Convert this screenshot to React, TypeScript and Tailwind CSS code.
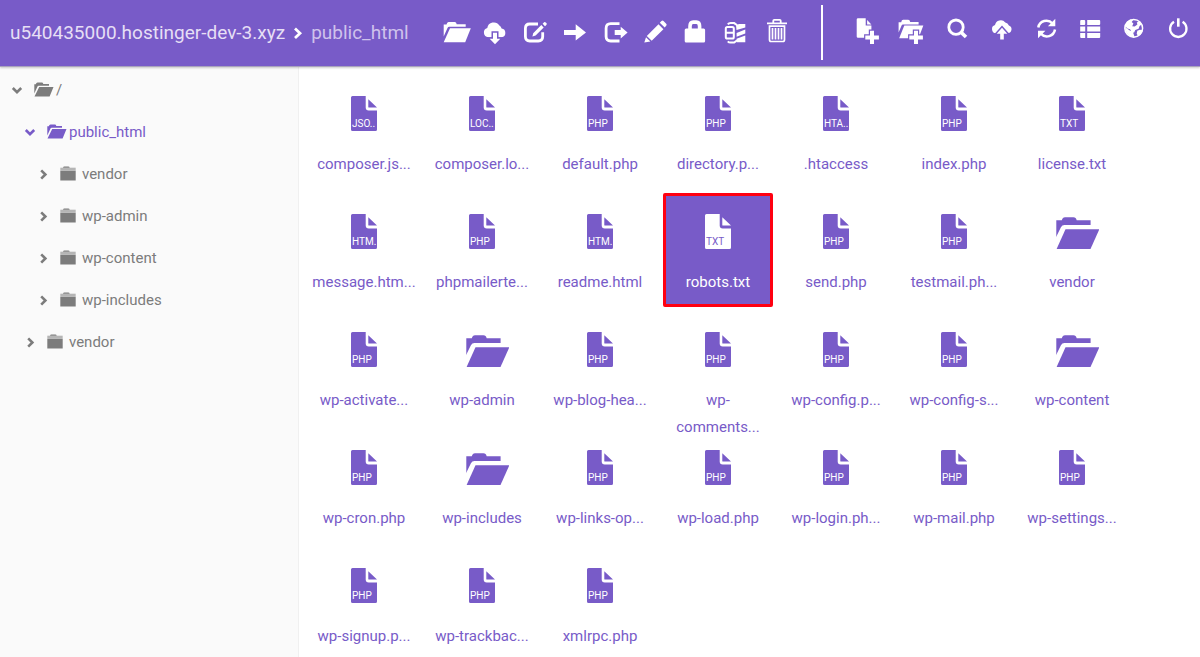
import type { ReactNode } from "react";

type IconProps = { children: ReactNode };

function Glyph({ children }: IconProps) {
  return (
    <svg viewBox="0 0 40 40" className="size-10" fill="currentColor" aria-hidden="true">
      {children}
    </svg>
  );
}

const line = { fill: "none", stroke: "currentColor" } as const;
const gap = "stroke-[#785bc8]";

const fileActions: { label: string; icon: ReactNode }[] = [
  {
    label: "Open",
    icon: (
      <>
        <path d="M6.7 12.5h2.8q.5-2.5 2-2.5h6.2q1.6 0 2 2.3h9v2.5H12.2q-1.2 0-1.7 1.2L6.7 24.5z" />
        <path d="M13 16.2h20.8l-5.6 14.1H6.7z" />
      </>
    ),
  },
  {
    label: "Download",
    icon: (
      <>
        <path d="M11.3 25.3a4.7 4.7 0 0 1-1-9.2 6.6 6.6 0 0 1 12.1-2.6 5.2 5.2 0 0 1 2.2 3.1 4.4 4.4 0 0 1 0 8.7z" />
        <path d="M16 20.7h4v6h3.3L18 32.3l-5.3-5.6H16z" className={gap} strokeWidth="3" />
        <path d="M16 20.7h4v6h3.3L18 32.3l-5.3-5.6H16z" />
      </>
    ),
  },
  {
    label: "Rename",
    icon: (
      <>
        <path d="M21 12h-8.300Q8.400 12 8.400 16.300v8.300q0 4.400 4.300 4.400h8.600q4.400 0 4.400-4.400v-4.400" {...line} strokeWidth="2.8" />
        <path d="M16.200 21.200l8.100-8.100 2.400 2.400-8.100 8.100-3.200.8zM25.600 11.800l1.500-1.500q.8-.6 1.600.1l.7.700q.7.800.1 1.600L28 14.200z" />
      </>
    ),
  },
  {
    label: "Copy",
    icon: <path d="M7 18h11.700v-5.700L29 20.400l-10.300 8V23H7z" />,
  },
  {
    label: "Move",
    icon: (
      <>
        <path d="M22.500 11.700h-8.800q-4.600 0-4.600 4.600v8.300q0 4.400 4.600 4.400h8.800" {...line} strokeWidth="2.800" />
        <path d="M17.700 18h6v-3.200l6.900 5.800-6.900 5.800V23h-6z" />
      </>
    ),
  },
  {
    label: "Edit",
    icon: (
      <path d="M9.800 24L21.500 12.300l4.900 4.900L14.700 28.800zM22.800 10.800l1.700-1.700q1-1 2 0l2.700 2.700q1 1 0 2L27.700 15.600zM9 25.200l4.400 4.200-6.100 1.100z" />
    ),
  },
  {
    label: "Permissions",
    icon: (
      <>
        <rect x="7.700" y="16.500" width="20.400" height="14" rx="1.500" />
        <path d="M13 17v-2.700q0-4.200 3.200-4.200h3.200q3.200 0 3.200 4.200V17" {...line} strokeWidth="3.600" />
      </>
    ),
  },
  {
    label: "Archive",
    icon: (
      <>
        <rect x="8.800" y="15" width="8" height="11.600" rx="1.600" {...line} strokeWidth="2" />
        <path d="M8.800 20.800h8M10.800 12.300q1-1.200 2.800-1.200h3.600l3 2.200M10.800 29.300q1 1.200 2.800 1.200h3.600l3-2.200" {...line} strokeWidth="2" />
        <path d="M19 13.200l3-1.200h6.300v3.600L19.500 18zM19.600 21l8.700-3.600v4l-8.700 3.400zM19.600 26.800l8.700-3.400v6.800h-8.600z" />
      </>
    ),
  },
  {
    label: "Delete",
    icon: (
      <>
        <path d="M10 11.400h20M16.300 11V8.800q0-1 1-1h5.400q1 0 1 1V11" {...line} strokeWidth="1.800" />
        <path d="M12.500 14.200h15v13.600q0 1.700-1.700 1.700H14.200q-1.700 0-1.700-1.700zM15.500 16v11.500M18.500 16v11.500M21.500 16v11.500M24.500 16v11.500" {...line} strokeWidth="1.700" />
      </>
    ),
  },
];

const plus = "M23 21.700h4V26.400h4.900v4H27V35h-4v-4.600h-4.700v-4H23z";

const globalActions: { label: string; icon: ReactNode }[] = [
  {
    label: "New file",
    icon: (
      <>
        <path d="M11 9.300h7.700v7.300h5.700v12.200H11q-1.300 0-1.300-1.200V10.500q0-1.200 1.300-1.200zM20.100 11l4.300 4.400h-4.300z" />
        <path d={plus} className={gap} strokeWidth="2.400" />
        <path d={plus} />
      </>
    ),
  },
  {
    label: "New folder",
    icon: (
      <>
        <path d="M7.600 13.200h2.600q.4-2.400 2-2.400h5q1.600 0 2 2.200h8.400v2.400H12q-1 0-1.400 1L7.600 23.500z" />
        <path d="M13.300 16.600h19L27.500 29.300H8.200z" />
        <path d={plus} className={gap} strokeWidth="2.400" />
        <path d={plus} />
      </>
    ),
  },
  {
    label: "Search",
    icon: (
      <>
        <circle cx="20" cy="18.200" r="7.200" {...line} strokeWidth="2.800" />
        <path d="M25 23.200l5 4.800" {...line} strokeWidth="3.600" />
      </>
    ),
  },
  {
    label: "Upload",
    icon: (
      <>
        <path d="M15.800 24.200a4.200 4.200 0 0 1-.8-8.200 5.900 5.900 0 0 1 10.300-2.600 5.300 5.300 0 0 1 3.600 3 4 4 0 0 1-.7 7.700z" />
        <path d="M20.200 30.500v-5.700h-3.500l5.300-6 5.300 6h-3.500v5.700z" className={gap} strokeWidth="3" />
        <path d="M20.200 30.500v-5.700h-3.500l5.300-6 5.300 6h-3.500v5.700z" />
      </>
    ),
  },
  {
    label: "Refresh",
    icon: (
      <>
        <path d="M13.300 18.500a8.200 8.200 0 0 1 14.200-4M30 20.500a8.200 8.200 0 0 1-14.200 4.200" {...line} strokeWidth="2.500" />
        <path d="M30.300 9.800v7.400h-7.400zM13 29.200v-7.400h7.400z" />
      </>
    ),
  },
  {
    label: "List view",
    icon: (
      <path d="M12.200 11h3q1 0 1 1v3q0 1-1 1h-4V12q0-1 1-1zM18.200 11h12q1 0 1 1v3q0 1-1 1h-12zM11.200 17.500h5v5h-5zM18.200 17.500h13v5h-13zM11.200 24h5v5h-4q-1 0-1-1zM18.200 24h13v4q0 1-1 1h-12z" />
    ),
  },
  {
    label: "Language",
    icon: (
      <>
        <circle cx="19.700" cy="19.300" r="8.900" {...line} strokeWidth="1.500" />
        <path d="M11 17q1-4.300 5.500-6.600l2.700.5-1.500 2 1.700 1.500-1.200 2.800 2.500.4 2.700-2-.6-2 2.500-1.300 2.700 3-2.400 1.700-1 2.700-3.300 1.400-1.300 2.700-2.700-1.200-1.200-2.400-2.600-.6zM10.900 18l4.500 3.200 3.600 2.100 1.700 5-2.500-.2q-6.200-1.900-7.300-10.100zM23.300 21.700l2.600-.9 2.900.5q-.9 4-4.500 5.900l-1.600-2.500z" />
      </>
    ),
  },
  {
    label: "Log out",
    icon: (
      <>
        <path d="M16 12.800a8.200 8.200 0 1 0 8.600 0" {...line} strokeWidth="2.300" />
        <path d="M19 9.300h2.600v8.400H19z" />
      </>
    ),
  },
];

function Chevron({ open }: { open: boolean }) {
  return (
    <svg viewBox="0 0 14 14" className="size-3.5 shrink-0" aria-hidden="true">
      <path d={open ? "M2.800 5l4.200 4.200L11.200 5" : "M5.200 3.300l4.200 4.200-4.200 4.200"} {...line} strokeWidth="2.600" />
    </svg>
  );
}

function TreeFolder({ open }: { open: boolean }) {
  return (
    <svg viewBox="0 0 20 16" className="h-4 w-5 shrink-0" fill="currentColor" aria-hidden="true">
      {open ? (
        <path d="M.3 2.300h1.500Q2.300.6 3.500.6h4.300q1.200 0 1.500 1.300H15v1.900H4.600q-.8 0-1.100.8L.3 11.500zM5.200 5h14.300l-3.900 9.500H.5z" />
      ) : (
        <>
          <path d="M3 1.700Q3.200.5 4.400.5h3.900q1.200 0 1.400 1.200z" />
          <path d="M.3 1.700h15.400v2.600H.3z" opacity=".55" />
          <path d="M.3 4.600h15.400v9.900H.3z" />
        </>
      )}
    </svg>
  );
}

type Node = { name: string; open?: boolean; active?: boolean; children?: Node[] };

const tree: Node = {
  name: "/",
  open: true,
  children: [
    {
      name: "public_html",
      open: true,
      active: true,
      children: [{ name: "vendor" }, { name: "wp-admin" }, { name: "wp-content" }, { name: "wp-includes" }],
    },
    { name: "vendor" },
  ],
};

function TreeNode({ node }: { node: Node }) {
  return (
    <li>
      <button
        type="button"
        className={
          "flex h-[42px] w-full items-center text-left text-[15px] " +
          (node.active ? "text-[#785bc8]" : "text-[#7c7c7c]")
        }
      >
        <Chevron open={!!node.open} />
        <span className="ml-2.5 flex items-center gap-0.5">
          <TreeFolder open={!!node.open} />
          {node.name}
        </span>
      </button>
      {node.children && (
        <ul className="pl-[13px]">
          {node.children.map((child) => (
            <TreeNode key={child.name} node={child} />
          ))}
        </ul>
      )}
    </li>
  );
}

type Entry = { name: string; ext?: string; selected?: boolean };

const entries: Entry[] = [
  { name: "composer.js...", ext: "JSO.." },
  { name: "composer.lo...", ext: "LOC.." },
  { name: "default.php", ext: "PHP" },
  { name: "directory.p...", ext: "PHP" },
  { name: ".htaccess", ext: "HTA.." },
  { name: "index.php", ext: "PHP" },
  { name: "license.txt", ext: "TXT" },
  { name: "message.htm...", ext: "HTM." },
  { name: "phpmailerte...", ext: "PHP" },
  { name: "readme.html", ext: "HTM." },
  { name: "robots.txt", ext: "TXT", selected: true },
  { name: "send.php", ext: "PHP" },
  { name: "testmail.ph...", ext: "PHP" },
  { name: "vendor" },
  { name: "wp-activate...", ext: "PHP" },
  { name: "wp-admin" },
  { name: "wp-blog-hea...", ext: "PHP" },
  { name: "wp-comments...", ext: "PHP" },
  { name: "wp-config.p...", ext: "PHP" },
  { name: "wp-config-s...", ext: "PHP" },
  { name: "wp-content" },
  { name: "wp-cron.php", ext: "PHP" },
  { name: "wp-includes" },
  { name: "wp-links-op...", ext: "PHP" },
  { name: "wp-load.php", ext: "PHP" },
  { name: "wp-login.ph...", ext: "PHP" },
  { name: "wp-mail.php", ext: "PHP" },
  { name: "wp-settings...", ext: "PHP" },
  { name: "wp-signup.p...", ext: "PHP" },
  { name: "wp-trackbac...", ext: "PHP" },
  { name: "xmlrpc.php", ext: "PHP" },
];

function EntryIcon({ ext, selected }: { ext?: string; selected?: boolean }) {
  if (!ext) {
    return (
      <svg viewBox="0 0 54 35" className="h-[35px] w-[54px] shrink-0" fill="currentColor" aria-hidden="true">
        <path d="M11.300 6.300h5.500q.8-3 3.200-3h8.500q2.500 0 3.200 3h13.900v5.700H21q-2.500 0-3.400 2L11.300 23.500z" />
        <path d="M9.500 29L17 13.800q.8-1.500 2.500-1.500H46" {...line} stroke="white" strokeWidth="2.400" />
        <path d="M20.500 15.200H54.300L45.500 35H11.600z" />
      </svg>
    );
  }
  return (
    <span className="relative block h-[35px] w-[26px] shrink-0">
      <svg viewBox="0 0 26 35" className="h-[35px] w-[26px]" fill="currentColor" aria-hidden="true">
        <path d="M1.500 0h13.200v11.500q0 3 3 3H26V33.500q0 1.500-1.500 1.500h-23Q0 35 0 33.500v-32Q0 0 1.500 0zM17.300 3.300L26 11.600h-8q-.7 0-.7-.7z" />
      </svg>
      <span
        className={
          "absolute bottom-px left-px text-[10px] leading-3 " + (selected ? "text-[#785bc8]" : "text-white")
        }
      >
        {ext}
      </span>
    </span>
  );
}

export default function App() {
  return (
    <div className="flex min-h-screen flex-col bg-white font-['Roboto',sans-serif]">
      <header className="relative flex h-[67px] items-center border-b border-[#a9a3bd] bg-[#785bc8] text-white shadow-[0_1px_2px_rgba(0,0,0,0.2)]">
        <nav aria-label="Breadcrumb" className="flex w-[437px] shrink-0 items-center pl-2.5 text-[19px]">
          <a href="#root" className="text-[#e6dff5]">
            u540435000.hostinger-dev-3.xyz
          </a>
          <svg viewBox="0 0 10 14" className="mx-2 h-3.5 w-2.5 shrink-0" aria-hidden="true">
            <path d="M2 2.500l5 4.700-5 4.700" {...line} strokeWidth="2.800" />
          </svg>
          <a href="#public_html" className="text-[#cfc2ec]">
            public_html
          </a>
        </nav>
        <div className="mb-0.5 flex">
          {fileActions.map((a) => (
            <button key={a.label} type="button" aria-label={a.label} className="size-10">
              <Glyph>{a.icon}</Glyph>
            </button>
          ))}
        </div>
        <div className="mb-0.5 ml-6 h-[55px] w-0.5 shrink-0 bg-white" />
        <div className="mr-0.5 mb-2 ml-6 flex flex-1 justify-between">
          {globalActions.map((a) => (
            <button key={a.label} type="button" aria-label={a.label} className="size-10">
              <Glyph>{a.icon}</Glyph>
            </button>
          ))}
        </div>
      </header>
      <div className="flex flex-1">
        <aside className="w-[299px] shrink-0 border-r border-[#f0f0f0] bg-[#fafafa] pt-0.5 pl-2.5">
          <ul>
            <TreeNode node={tree} />
          </ul>
        </aside>
        <main className="flex-1 pt-2 pl-2.5">
          <ul className="grid grid-cols-[repeat(auto-fill,110px)] gap-x-2 gap-y-1">
            {entries.map((e) => (
              <li key={e.name}>
                <button
                  type="button"
                  className={
                    "flex h-[114px] w-full flex-col items-center text-[15px] leading-[27px] " +
                    (e.selected
                      ? "rounded-xs border-[3px] border-[#ff0010] bg-[#785bc8] pt-[18px] text-white"
                      : "px-[3px] pt-[21px] text-[#785bc8]")
                  }
                >
                  <EntryIcon ext={e.ext} selected={e.selected} />
                  <span className="mt-5 max-w-full text-center">{e.name}</span>
                </button>
              </li>
            ))}
          </ul>
        </main>
      </div>
    </div>
  );
}
